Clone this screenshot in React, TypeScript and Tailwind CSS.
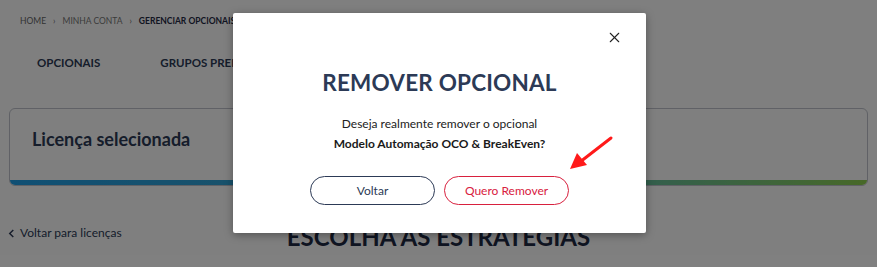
import { X } from 'lucide-react';

export default function App() {
  return (
    <div className="relative w-[877px] h-[267px] overflow-hidden bg-white font-['Lato',sans-serif]">
      {/* Página por trás do modal */}
      <div className="pt-[15px]">
        <nav className="flex items-center gap-[7px] pl-[20px] text-[8.5px] leading-[12px] text-[#666]">
          <span>HOME</span>
          <span>›</span>
          <span className="text-[#777]">MINHA CONTA</span>
          <span>›</span>
          <span className="font-bold text-[#1f2a44]">GERENCIAR OPCIONAIS</span>
        </nav>

        <div className="mt-[29px] flex gap-[60px] pl-[37px] text-[11.5px] leading-[14px] font-bold text-[#2c3a56]">
          <span>OPCIONAIS</span>
          <span>GRUPOS PREMIUM</span>
        </div>

        <div className="mx-[9px] mt-[38px] h-[78px] rounded-[6px] border border-[#c0c3cc] overflow-hidden flex flex-col">
          <div className="flex-1 pl-[22px] pt-[19px]">
            <h2 className="text-[18px] leading-[22px] font-bold text-[#2c3a56]">Licença selecionada</h2>
          </div>
          <div className="h-[5px] bg-gradient-to-r from-[#1f9fe8] via-[#3fa8c8] to-[#8fd24f]" />
        </div>

        <div className="mt-[40px] flex items-start">
          <a className="flex items-center gap-[5px] pl-[8px] text-[12px] leading-[14px] text-[#2c3a56]">
            <svg className="w-[7px] h-[9px]" viewBox="0 0 7 10" fill="none" stroke="currentColor" strokeWidth="1.6">
              <path d="M5.5 1 L1.5 5 L5.5 9" />
            </svg>
            Voltar para licenças
          </a>
        </div>
        <h1 className="-mt-[17px] text-center text-[24px] leading-[28px] font-bold text-[#1f2a44]">ESCOLHA AS ESTRATEGIAS</h1>
      </div>

      {/* Overlay */}
      <div className="absolute inset-0 bg-black/50" />

      {/* Modal */}
      <div className="absolute left-[233px] top-[13px] w-[413px] h-[220px] bg-white rounded-[2px] shadow-[0_2px_8px_rgba(0,0,0,0.35)] flex flex-col items-center">
        <button aria-label="Fechar" className="absolute top-[16px] right-[23px] text-[#222]">
          <X className="w-[17px] h-[17px]" strokeWidth={1.5} />
        </button>
        <h3 className="mt-[56px] text-[22.5px] leading-[28px] font-bold tracking-[0.2px] text-[#2c3a56]">REMOVER OPCIONAL</h3>
        <p className="mt-[17px] text-[12px] leading-[20px] text-[#222]">Deseja realmente remover o opcional</p>
        <p className="text-[12px] leading-[20px] font-bold text-[#1a1a1a]">Modelo Automação OCO &amp; BreakEven?</p>
        <div className="mt-[22px] flex gap-[9px]">
          <button className="w-[125px] h-[29px] rounded-full border border-[#2c3a56] text-[12px] text-[#2c3a56]">Voltar</button>
          <button className="w-[125px] h-[29px] rounded-full border border-[#d8203e] text-[12px] text-[#d8203e]">Quero Remover</button>
        </div>
      </div>

      {/* Seta vermelha */}
      <svg className="absolute left-[566px] top-[134px] w-[50px] h-[40px]" viewBox="0 0 50 40" fill="none">
        <path d="M45 4 L14 28" stroke="#ff1a1a" strokeWidth="3" strokeLinecap="round" />
        <path d="M4 35 L11 19 L21 31 Z" fill="#ff1a1a" />
      </svg>
    </div>
  );
}
